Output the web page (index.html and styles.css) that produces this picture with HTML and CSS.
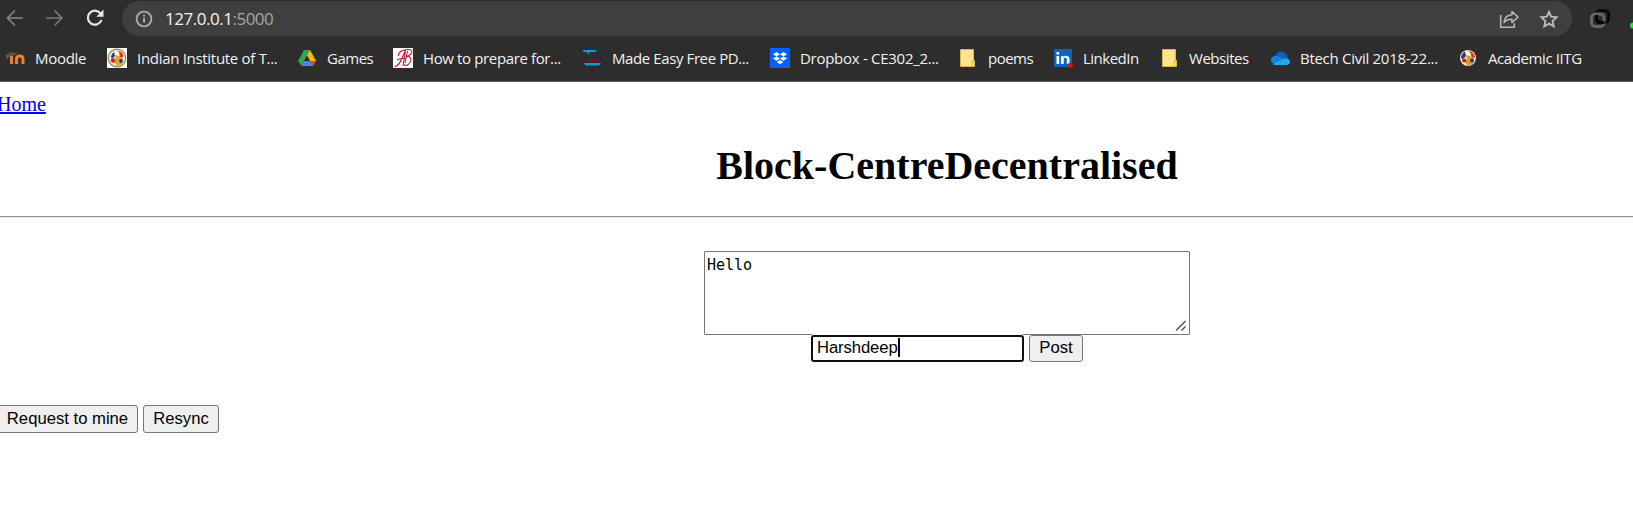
FILE: index.html
```html
<!DOCTYPE html>
<html lang="en">
<head>
<meta charset="utf-8">
<title>Block-Centre</title>
<link rel="stylesheet" href="styles.css">
</head>
<body>
<header class="browser">
  <div class="toolbar">
    <svg class="nav" viewBox="0 0 120 36"><g fill="none" stroke-width="1.7"><path stroke="#858585" d="M23 18H8M15 10.500L7.500 18l7.500 7.500"/><path stroke="#7a7a7a" d="M46 18h16M54.500 10.500L62 18l-7.500 7.500"/><path stroke="#e8e8e8" stroke-width="2.200" d="M100.500 13.500A7 7 0 1 0 101.500 20"/></g><path fill="#e8e8e8" d="M103.500 9.500v7.200h-7.200z"/></svg>
    <div class="address">
      <svg class="info" viewBox="0 0 18 18"><circle cx="9" cy="9" r="7.400" fill="none" stroke="#a9abae" stroke-width="1.900"/><path fill="#a9abae" d="M8.100 7.800h1.900v5H8.100zM8.100 4.700h1.900v1.900H8.100z"/></svg>
      <span class="url"><span class="host">127.0.0.1</span><span class="port">:5000</span></span>
      <svg class="actions" viewBox="0 0 66 24"><g fill="none" stroke="#b9b9b9" stroke-width="1.500"><path d="M1.700 8v12.300h13.600v-4"/><path stroke-linejoin="round" d="M5 15.500c.5-5 3-7.500 8-7.800V4.500l6 5.600-6 5.400v-3.200c-3.500-.1-6 1-8 3.200z"/><path stroke-width="1.900" d="M50 4.800l2.200 4.900 5.400.6-4 3.700 1.100 5.400-4.700-2.800-4.700 2.800 1.100-5.400-4-3.700 5.400-.6z"/></g></svg>
    </div>
    <svg class="extensions" viewBox="0 0 61 36"><g fill="none" stroke-width="3"><rect x="24.500" y="10.500" width="12" height="12" rx="4" stroke="#050505"/><rect x="19.500" y="14" width="12.500" height="12.500" rx="4" stroke="#66666b"/><path stroke="#050505" d="M24.500 15v3.500q0 4 4 4h4"/></g><circle cx="61" cy="25.500" r="3" fill="#1be62a"/></svg>
  </div>
  <nav class="bookmarks">
    <a class="bm w-moodle"><svg viewBox="0 0 20 20"><path fill="none" stroke="#5d5552" stroke-width="2" d="M1 8l5-3 4 1-4 2H2v3"/><path fill="none" stroke="#ef7e2c" stroke-width="3" d="M6.500 8v8M11.500 16v-5q0-3 3.200-3t3.300 3v5"/></svg><span>Moodle</span></a>
    <a class="bm w-iit"><svg viewBox="0 0 20 20"><path fill="#fff" d="M0 0h20v20H0z"/><circle cx="10" cy="10" r="8.800" fill="#f4edc9" stroke="#8d8767" stroke-width="1.200"/><path fill="#253b9a" d="M4 9q0-3 3-5l1 4-3 3z"/><path fill="#e53422" d="M10 2.500q6 1 6.500 6l-3 2-1-4z"/><path fill="#d6a917" d="M8 7l4 1 4 3-1 5-5 2-3-4 2-3z"/><circle cx="10.200" cy="5.300" r="2" fill="#fff"/><circle cx="6" cy="12.500" r="2.200" fill="#d7142a"/><circle cx="14" cy="13" r="1.900" fill="#1b368f"/></svg><span>Indian Institute of T...</span></a>
    <a class="bm w-games"><svg viewBox="0 0 20 20"><path fill="#ffba00" d="M7 2h6l6 11h-6z"/><path fill="#2da94f" d="M7 2l3 5.500L4.500 18 1 13z"/><path fill="#2da94f" d="M7 2h6l-3 5.500z"/><path fill="#ea4335" d="M13 13h6l-2.800 5z"/><path fill="#2d2d2d" d="M10 8l3 5H7z"/><path fill="#4285f4" d="M7 13h6.500l2.700 5H4.500z"/></svg><span>Games</span></a>
    <a class="bm w-how"><svg viewBox="0 0 20 20"><path fill="#fff" d="M0 0h20v20H0z"/><path fill="none" stroke="#c21c3d" stroke-width="1.100" d="M1.500 18.500C7 19 10 7 12.500 2L10 18M5.500 8C5 4 10 1 16 1.500c5 .5 3 6-3 7 5-1 6 3 4 6s-5 4-6 2M4 12c3-2 6-1 9-2M14.500 3L12 15"/></svg><span>How to prepare for...</span></a>
    <a class="bm w-made"><svg viewBox="0 0 20 20"><path fill="#119bd4" d="M.5 2h14l-1 2H8L6 7 5.500 4H2zM1 15h18l-2 2.500H4z"/><path stroke="#572039" stroke-width="1.500" d="M6 12.700h11"/></svg><span>Made Easy Free PD...</span></a>
    <a class="bm w-dropbox"><svg viewBox="0 0 20 20"><path fill="#0061fe" d="M0 0h20v20H0z"/><path fill="#fff" d="M6.500 4L10 6.200 6.500 8.400 3 6.200zM13.500 4L17 6.200l-3.500 2.200L10 6.200zM6.500 8.400l3.500 2.200-3.500 2.200L3 10.600zM13.500 8.400l3.500 2.200-3.500 2.200-3.500-2.200zM10 11.900l3.300 2.100L10 16.200 6.700 14z"/></svg><span>Dropbox - CE302_2...</span></a>
    <a class="bm w-poems"><svg viewBox="0 0 20 20"><path fill="#ffe48d" stroke="#d9b847" d="M2.500 1.500h13v11h1v6h-14z"/><path fill="none" stroke="#d9b847" d="M14 18v-4.500h2.500"/></svg><span>poems</span></a>
    <a class="bm w-linkedin"><svg viewBox="0 0 20 20"><rect x="1" y="1" width="18" height="18" rx="1" fill="#0a66c2"/><path fill="#fff" d="M3.500 8h2.700v8H3.500zM3.500 4h2.700v2.500H3.500zM8 8h2.500v1.200C12 7 16.500 7.300 16.500 11v5h-2.700v-4.500c0-2.200-3.100-2.200-3.100 0V16H8z"/><circle cx="17.300" cy="17.500" r="2.700" fill="#d31119"/></svg><span>LinkedIn</span></a>
    <a class="bm w-web"><svg viewBox="0 0 20 20"><path fill="#ffe48d" stroke="#d9b847" d="M3.500 1.500h13v11h1v6h-14z"/><path fill="none" stroke="#d9b847" d="M15 18v-4.500h2.500"/></svg><span>Websites</span></a>
    <a class="bm w-btech"><svg viewBox="0 0 20 20"><path fill="#0864b8" d="M5 9q1-5 6-5.500 5 0 7 6.500l-5 4z"/><path fill="#0f83d9" d="M2 15q-3-5 2-7 3-1 6 1l6 3-10 4z"/><path fill="#27a6ee" d="M3 16l10-5q3-1.500 6 .5 2.500 3.500-1.500 5.500H5q-1.500 0-2-1z"/></svg><span>Btech Civil 2018-22...</span></a>
    <a class="bm w-academic"><svg viewBox="0 0 20 20"><circle cx="10" cy="10" r="8" fill="#f2e7b7"/><path fill="#253b9a" d="M3 10q0-4 4-6.500L8 8l-3 3z"/><path fill="#e53422" d="M10 2.500q6 1 7 7l-3 1-1-4z"/><path fill="#d99d1f" d="M8 7l4 1 4 3-1 5-5 2-3-4 2-3z"/><circle cx="10.200" cy="5.300" r="2.100" fill="#fff"/><circle cx="6.200" cy="12.500" r="2.100" fill="#d7142a"/><circle cx="14" cy="12.500" r="1.900" fill="#1b368f"/></svg><span>Academic IITG</span></a>
  </nav>
</header>
<main class="page">
  <a class="home" href="#">Home</a>
  <h1 class="title">Block-CentreDecentralised</h1>
  <hr class="rule">
  <form class="post-form">
    <div class="message">Hello<svg class="grip" viewBox="0 0 12 12"><path stroke="#555" stroke-width="1.500" d="M1 10.500l9.500-9.500M6.500 10.500l4-4"/></svg></div>
    <div class="author-row">
      <div class="author"><span>Harshdeep</span><i class="caret"></i></div>
      <button type="button" class="btn post">Post</button>
    </div>
  </form>
  <div class="controls">
    <button type="button" class="btn mine">Request to mine</button>
    <button type="button" class="btn resync">Resync</button>
  </div>
</main>
</body>
</html>
```
FILE: styles.css
```css
* { box-sizing: border-box; }
body { margin: 0; background: #fff; overflow: hidden; font-family: "Liberation Sans", Arial, sans-serif; }
.browser { height: 82px; background: #2d2d2d; border-bottom: 1px solid #5a5a5a; font-family: "Open Sans", "Segoe UI", sans-serif; }
.toolbar { height: 36px; display: flex; }
.nav { width: 120px; height: 36px; flex: none; }
.address { width: 1450px; height: 35px; margin: 1px 0 0 2px; border-radius: 18px; background: #3f3f3f; display: flex; align-items: center; padding: 0 7px 0 13px; }
.info { width: 18px; height: 18px; }
.url { margin-left: 12px; font-size: 17px; line-height: 24px; letter-spacing: -.48px; flex: 1; white-space: nowrap; }
.host { color: #f4f4f4; }
.port { color: #a5a5a5; }
.actions { width: 66px; height: 24px; flex: none; }
.extensions { width: 61px; height: 36px; flex: none; overflow: hidden; }
.bookmarks { display: flex; height: 45px; padding: 0 0 2px 5px; }
.bm { display: flex; align-items: center; flex: none; gap: 10px; color: #f2f2f2; font-size: 15px; line-height: 20px; white-space: nowrap; }
.bm svg { width: 20px; height: 20px; flex: none; }
.w-moodle { width: 102px; letter-spacing: -.3px; }
.w-iit { width: 190px; letter-spacing: -.3px; }
.w-games { width: 96px; letter-spacing: -.5px; }
.w-how { width: 189px; letter-spacing: -.37px; }
.w-made { width: 188px; letter-spacing: -.4px; }
.w-dropbox { width: 188px; letter-spacing: -.28px; }
.w-poems { width: 95px; letter-spacing: -.5px; }
.w-linkedin { width: 106px; letter-spacing: -.5px; }
.w-web { width: 111px; letter-spacing: -.45px; }
.w-btech { width: 188px; letter-spacing: -.28px; }
.w-academic { width: 130px; letter-spacing: -.4px; }
.page { padding-top: 10px; }
.home { display: block; width: 60px; margin-left: -3px; font: 20px/24px "Liberation Serif", "Times New Roman", serif; color: #0000ee; }
.title { margin: 27px 0 0; padding-left: 261px; font: bold 40px/46px "Liberation Serif", "Times New Roman", serif; text-align: center; }
.rule { margin: 27px 0 33px; border: 0; height: 2px; border-top: 1px solid #8f8f8f; border-bottom: 1px solid #eee; }
.post-form { display: flex; flex-direction: column; align-items: center; padding-left: 261px; }
.message { position: relative; width: 486px; height: 84px; border: 1px solid #767676; border-radius: 1px; padding: 3px 2px; font: 15px/20px "DejaVu Sans Mono", Consolas, monospace; }
.grip { position: absolute; right: 2px; bottom: 2px; width: 12px; height: 12px; }
.author-row { display: flex; gap: 5px; position: relative; }
.author { width: 213px; height: 27px; border: 2px solid #101010; border-radius: 3px; background: #fff; box-shadow: 0 -1px #fff; display: flex; align-items: center; padding: 0 3px 2px 4px; font-size: 16.670px; line-height: 20px; letter-spacing: -.1px; }
.caret { width: 2px; height: 19px; background: #000; }
.btn { height: 27px; border: 1px solid #767676; border-radius: 3px; background: #efefef; color: #000; font: 16.670px/20px "Liberation Sans", Arial, sans-serif; padding: 0 0 1px; }
.post { width: 54px; }
.controls { display: flex; gap: 5px; margin: 43px 0 0 -3px; }
.controls .btn { height: 28px; }
.mine { width: 141px; }
.resync { width: 76px; }
```
